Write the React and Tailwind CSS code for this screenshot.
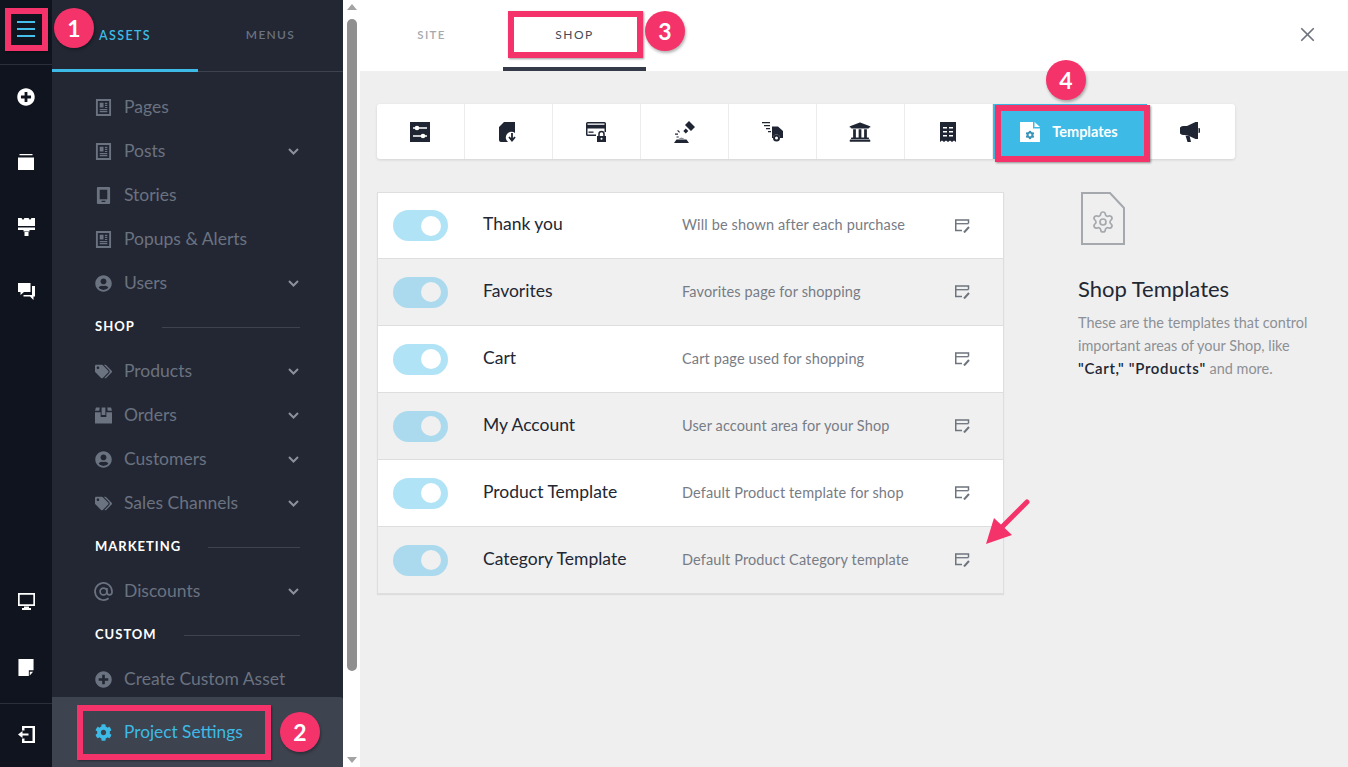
import { Settings, X } from "lucide-react";
import { FaCog, FaPlusCircle, FaTags, FaUniversity, FaUserCircle } from "react-icons/fa";

function PageIcon({ className }) {
  return (
    <svg className={className} viewBox="0 0 16 18" fill="currentColor">
      <path fillRule="evenodd" d="M0 0h16v18H0zM2 2v14h12V2z" />
      <path d="M4 4h4v5H4zM9.500 4H12v1.300H9.500zM9.500 6.200H12v1.300H9.500zM9.500 8.400H12v1.100H9.500zM4 10.500h8v1.300H4zM4 12.800h8v1.300H4z" />
    </svg>
  );
}

function PhoneIcon({ className }) {
  return (
    <svg className={className} viewBox="0 0 14 18" fill="currentColor">
      <path fillRule="evenodd" d="M1 0h12a1 1 0 0 1 1 1v16a1 1 0 0 1-1 1H1a1 1 0 0 1-1-1V1a1 1 0 0 1 1-1zM3 3v10h8V3zM5 14.600v1.200h4v-1.200z" />
    </svg>
  );
}

function BoxIcon({ className }) {
  return (
    <svg className={className} viewBox="0 0 18 17" fill="currentColor">
      <path d="M0 5h6v5h6V5h6v12H0zM1 0h4L4.500 3.600H0zM13 0h4l1 3.600h-4.500zM7 0h4v8H7z" />
    </svg>
  );
}

function AtIcon({ className }) {
  return (
    <svg className={`${className} scale-[1.2]`} viewBox="0 0 24 24" fill="none" stroke="currentColor" strokeWidth="2">
      <circle cx="12" cy="12" r="4" />
      <path d="M16 8v5a3 3 0 0 0 6 0v-1a10 10 0 1 0-4 8" />
    </svg>
  );
}

function ChevronIcon() {
  return (
    <svg className="h-[7px] w-[11px] text-[#8b909a]" viewBox="0 0 11 7" fill="none" stroke="currentColor" strokeWidth="2">
      <path d="M1 1l4.500 4.500L10 1" />
    </svg>
  );
}

function MenuLink({ icon: Icon, label, arrow }) {
  return (
    <div className="flex h-11 items-center pl-[43px] pr-[44px] text-[#6b7280]">
      <span className="flex w-[29px] shrink-0 items-center">
        <Icon className="h-[17px] w-[17px]" />
      </span>
      <span className="flex-1 text-[17.500px]">{label}</span>
      {arrow ? <ChevronIcon /> : null}
    </div>
  );
}

function MenuHeading({ label }) {
  return (
    <div className="flex h-[44px] items-center gap-[27px] pl-[43px] pr-[43px]">
      <span className="text-[13px] font-bold tracking-[1px] text-white">{label}</span>
      <span className="h-px flex-1 bg-[#3d4350]" />
    </div>
  );
}

function RailIcon({ children }) {
  return <div className="flex h-[65px] items-center justify-center text-white">{children}</div>;
}

function Rail() {
  return (
    <div className="flex h-full w-[52px] shrink-0 flex-col bg-[#10141e]">
      <div className="flex h-[65px] shrink-0 items-center justify-center border-b border-[#2a2f3a] pb-[6px]">
        <svg className="h-[16px] w-[18px] text-[#45c0ea]" viewBox="0 0 18 16" fill="none" stroke="currentColor" strokeWidth="2">
          <path d="M0 1h18M0 8h18M0 15h18" />
        </svg>
      </div>
      <div className="-mt-px flex-1">
        <RailIcon>
          <FaPlusCircle className="h-[18px] w-[18px]" />
        </RailIcon>
        <RailIcon>
          <svg className="h-4 w-4" viewBox="0 0 16 16" fill="currentColor">
            <path d="M0 3.500h16V16H0zM1.500 0h13v1.200h-13z" />
          </svg>
        </RailIcon>
        <RailIcon>
          <svg className="h-[18px] w-[17px]" viewBox="0 0 17 18" fill="currentColor">
            <path d="M0 0h3.500l1.500 2 1.500-2h4L12 2l1.500-2H17v8H0zM0 9.500h17V12h-5.500v1.500h-6V12H0zM6.500 14h4v4h-4z" />
          </svg>
        </RailIcon>
        <RailIcon>
          <svg className="h-[17px] w-[17px]" viewBox="0 0 17 17" fill="currentColor">
            <path d="M0 0h12.500v9H6l-3.500 3V9H0z" />
            <path d="M14 3h3v10.500h-1.500v3.500l-3.500-3.500H5.500V12H14z" />
          </svg>
        </RailIcon>
      </div>
      <div className="h-[66px]">
        <RailIcon>
          <svg className="h-[17px] w-[17px]" viewBox="0 0 17 17" fill="currentColor">
            <path fillRule="evenodd" d="M0 0h17v13H0zM1.700 1.700v9.600h13.600V1.700z" />
            <path d="M6 13.500h5V15h2v2H4v-2h2z" />
          </svg>
        </RailIcon>
      </div>
      <div className="mb-[2px] h-[66px]">
        <RailIcon>
          <svg className="h-[17px] w-4" viewBox="0 0 16 18" fill="currentColor">
            <path d="M0 0h16v12h-5v6H0zM12 13.500h3.500L12 17.500z" />
          </svg>
        </RailIcon>
      </div>
      <div className="flex h-[64px] shrink-0 items-center justify-center border-t border-[#2a2f3a] pb-[2px]">
        <svg className="h-[17px] w-[17px] text-white" viewBox="0 0 17 17" fill="currentColor">
          <path fillRule="evenodd" d="M4 0h13v17H4v-4.500h2.500V15h8V2h-8v2.500H4z" />
          <path d="M0 8.500 4.500 5v2.500h6v2h-6V12z" />
        </svg>
      </div>
    </div>
  );
}

function Sidebar() {
  return (
    <div className="flex h-full w-[291px] shrink-0 flex-col bg-[#222733]">
      <div className="flex h-[72px] shrink-0 border-b border-[#3d4350] text-[12px] font-semibold tracking-[1.300px]">
        <div className="-mb-px flex w-[146px] items-center justify-center border-b-[3px] border-[#3dbbe6] pt-[3px] text-[12.500px] tracking-[1.400px] text-[#3dbbe6]">ASSETS</div>
        <div className="flex w-[145px] items-center justify-center pb-[1px] text-[#6b7280]">MENUS</div>
      </div>
      <div className="min-h-0 flex-1 pt-[13px]">
        <MenuLink icon={PageIcon} label="Pages" />
        <MenuLink icon={PageIcon} label="Posts" arrow />
        <MenuLink icon={PhoneIcon} label="Stories" />
        <MenuLink icon={PageIcon} label="Popups & Alerts" />
        <MenuLink icon={FaUserCircle} label="Users" arrow />
        <MenuHeading label="SHOP" />
        <MenuLink icon={FaTags} label="Products" arrow />
        <MenuLink icon={BoxIcon} label="Orders" arrow />
        <MenuLink icon={FaUserCircle} label="Customers" arrow />
        <MenuLink icon={FaTags} label="Sales Channels" arrow />
        <MenuHeading label="MARKETING" />
        <MenuLink icon={AtIcon} label="Discounts" arrow />
        <MenuHeading label="CUSTOM" />
        <MenuLink icon={FaPlusCircle} label="Create Custom Asset" />
      </div>
      <div className="flex h-[70px] shrink-0 items-center rounded-tr-[3px] bg-[#3e4350] pl-[43px] text-[#3dbbe6]">
        <FaCog className="mr-[12px] h-[17px] w-[17px]" />
        <span className="text-[17.300px]">Project Settings</span>
      </div>
    </div>
  );
}

function Scrollbar() {
  return (
    <div className="flex h-full w-[17px] shrink-0 flex-col items-center bg-white">
      <div className="mt-[4px] h-0 w-0 border-x-[5px] border-b-[6px] border-x-transparent border-b-[#a3a3a3]" />
      <div className="mt-[9px] h-[652px] w-[10px] rounded-[5px] bg-[#8f8f8f]" />
      <div className="mt-auto mb-[4px] h-0 w-0 border-x-[5px] border-t-[6px] border-x-transparent border-t-[#a3a3a3]" />
    </div>
  );
}

function SlidersIcon() {
  return (
    <svg className="h-5 w-5" viewBox="0 0 20 20">
      <rect width="20" height="20" fill="#1f2532" />
      <path d="M3 6h14M3 14h14" stroke="#fff" strokeWidth="1.500" />
      <circle cx="7" cy="6" r="2.300" fill="#fff" />
      <circle cx="13" cy="14" r="2.300" fill="#fff" />
    </svg>
  );
}

function FileDownIcon() {
  return (
    <svg className="h-5 w-[18px]" viewBox="0 0 18 20">
      <path d="M5 0h11v11a5 5 0 0 0-7 9H2a2 2 0 0 1-2-2V5z" fill="#1f2532" />
      <path d="M13 11v7M10 15l3 3.500 3-3.500" stroke="#1f2532" strokeWidth="1.800" fill="none" />
    </svg>
  );
}

function CardLockIcon() {
  return (
    <svg className="h-5 w-5" viewBox="0 0 20 20">
      <path fillRule="evenodd" d="M1.500 0h17A1.500 1.500 0 0 1 20 1.500V10h-1.500V6.500h-17v6h8.500V14H1.500A1.500 1.500 0 0 1 0 12.500v-11A1.500 1.500 0 0 1 1.500 0z" fill="#1f2532" />
      <path d="M1.500 1.500h17v1.300h-17z" fill="#fff" />
      <path d="M2.500 9.500h5v1.300h-5z" fill="#1f2532" />
      <path d="M11 14h9v6h-9z" fill="#1f2532" />
      <path d="M13 14v-2a2.500 2.500 0 0 1 5 0v2" stroke="#1f2532" strokeWidth="1.500" fill="none" />
      <circle cx="15.500" cy="16.800" r="1" fill="#fff" />
    </svg>
  );
}

function GavelIcon() {
  return (
    <svg className="h-[22px] w-[21px]" viewBox="0 0 21 22" fill="#1f2532">
      <path d="M11 4 15 0l6 6-4 4zM11.800 7.500l2.500 2.500-2.500 2.500-2.500-2.500zM0 22l2.500-3.500h10L15 22z" />
      <path d="M4.500 17.500q3-1.500 6 0zM1 12.500h3v1.200H1zM4 9l2 2-.8.8-2-2zM2.500 15.500h2.200v1H2.500z" />
    </svg>
  );
}

function TruckIcon() {
  return (
    <svg className="h-[20px] w-[21px]" viewBox="0 0 21 20">
      <path d="M0 0h8v1.300H0zM2 3h6v1.300H2zM4 6h4v1.300H4zM6 9h3v1.300H6z" fill="#1f2532" />
      <path d="M10 4.500h6l5 4.500v7h-3a3.500 3.500 0 0 0-7 0h-1z" fill="#1f2532" />
      <circle cx="14.500" cy="16" r="3.500" fill="#1f2532" />
      <circle cx="14.500" cy="16" r="1.500" fill="#fff" />
    </svg>
  );
}

function ReceiptIcon() {
  return (
    <svg className="h-5 w-4" viewBox="0 0 16 20">
      <path d="M0 0h16v20l-2-1.500-2 1.500-2-1.500L8 20l-2-1.500L4 20l-2-1.500L0 20z" fill="#1f2532" />
      <path d="M3 5h4v1.500H3zM9 5h4v1.500H9zM3 9h4v1.500H3zM9 9h4v1.500H9zM3 13h4v1.500H3zM9 13h4v1.500H9z" fill="#fff" />
    </svg>
  );
}

function FileGearIcon() {
  return (
    <svg className="h-5 w-[20px]" viewBox="0 0 20 20">
      <path d="M0 0h13v6.500h7V20H0z" fill="#fff" />
      <path d="M14.500 0 20 5h-5.500z" fill="#fff" />
      <FaCog size={9} x={5.500} y={8.500} color="#3a93b8" />
    </svg>
  );
}

function MegaphoneIcon() {
  return (
    <svg className="h-5 w-5" viewBox="0 0 20 20" fill="#1f2532">
      <path d="M3.500 4H7l8.500-4H18v17h-2.500L7 13H3.500a4.500 4.500 0 0 1 0-9z" />
      <path d="M5.500 13.500h4l1.500 6.500H7.500zM18.500 6h.5a1 1 0 0 1 1 1v3a1 1 0 0 1-1 1h-.5z" />
    </svg>
  );
}

function ToolCell({ children }) {
  return <div className="flex h-full w-[88px] items-center justify-center border-r border-[#ececec] pr-px">{children}</div>;
}

function Toolbar() {
  return (
    <div className="flex h-[55px] w-[858px] rounded-[3px] bg-white shadow-[0_1px_3px_rgba(0,0,0,0.12)]">
      <ToolCell><SlidersIcon /></ToolCell>
      <ToolCell><FileDownIcon /></ToolCell>
      <ToolCell><CardLockIcon /></ToolCell>
      <ToolCell><GavelIcon /></ToolCell>
      <ToolCell><TruckIcon /></ToolCell>
      <ToolCell><FaUniversity className="h-[22px] w-[22px] text-[#1f2532]" /></ToolCell>
      <ToolCell><ReceiptIcon /></ToolCell>
      <div className="flex h-full w-[154px] items-center justify-center gap-[12px] bg-[#3dbbe6] pr-[2px] text-white">
        <FileGearIcon />
        <span className="text-[14.500px] font-bold">Templates</span>
      </div>
      <div className="flex h-full w-[88px] items-center justify-center pr-[2px]">
        <MegaphoneIcon />
      </div>
    </div>
  );
}

function EditIcon() {
  return (
    <svg className="h-[14px] w-[15px] text-[#6e747e]" viewBox="0 0 15 14" fill="none" stroke="currentColor">
      <path d="M13.500 4.500V1H.75v10.500H7" strokeWidth="1.500" />
      <path d="M1 4.700h12.500" strokeWidth="1.300" />
      <path d="M9 13.500 14 8" strokeWidth="2" />
    </svg>
  );
}

const templates = [
  { name: "Thank you", text: "Will be shown after each purchase" },
  { name: "Favorites", text: "Favorites page for shopping" },
  { name: "Cart", text: "Cart page used for shopping" },
  { name: "My Account", text: "User account area for your Shop" },
  { name: "Product Template", text: "Default Product template for shop" },
  { name: "Category Template", text: "Default Product Category template" },
];

function TemplateRow({ item, index }) {
  const odd = index % 2 === 1;
  return (
    <div className={`flex h-[67px] items-center border-b border-[#dedede] pl-[15px] ${index === 0 ? "border-t" : ""} ${odd ? "bg-[#f0f0f0]" : "bg-white"}`}>
      <div className={`flex h-[31px] w-[55px] shrink-0 items-center justify-end rounded-full pr-[7px] ${odd ? "bg-[#abdaee]" : "bg-[#b1e3f6]"}`}>
        <span className={`h-[20px] w-[20px] rounded-full ${odd ? "bg-[#f0f0f0]" : "bg-white"}`} />
      </div>
      <div className={`ml-[35px] w-[199px] shrink-0 text-[17.500px] text-[#222733] ${index === 0 ? "mb-[3px]" : "mb-[1px]"}`}>{item.name}</div>
      <div className={`w-[273px] shrink-0 text-[14.500px] tracking-[0.130px] text-[#777c85] ${index === 0 ? "mb-[2px]" : ""}`}>{item.text}</div>
      <EditIcon />
    </div>
  );
}

function InfoPanel() {
  return (
    <div className="ml-[74px] w-[240px]">
      <svg className="ml-[3px] h-[53px] w-[44px] text-[#a5a9ae]" viewBox="0 0 44 53" fill="none" stroke="currentColor" strokeWidth="2">
        <path d="M1 1h28l14 15v36H1z" />
        <Settings x={10} y={18} width={24} height={24} strokeWidth={1.700} />
      </svg>
      <h2 className="mt-[30px] text-[22px] leading-[28px] text-[#222733]">Shop Templates</h2>
      <p className="mt-[9px] text-[14.450px] leading-[22.500px] text-[#8c9096]">
        These are the templates that control important areas of your Shop, like{" "}
        <strong className="text-[15px] font-semibold tracking-[0.650px] text-[#222733]">"Cart," "Products"</strong> and more.
      </p>
    </div>
  );
}

function Badge({ children, className }) {
  return (
    <div className={`absolute flex h-10 w-10 items-center justify-center rounded-full bg-[#f5336b] text-[23px] font-bold text-white shadow-[1px_2px_3px_rgba(0,0,0,0.3)] ${className}`}>
      {children}
    </div>
  );
}

function Mark({ className }) {
  return <div className={`absolute border-[6px] border-[#f5336b] shadow-[1px_1px_2px_rgba(0,0,0,0.4)] ${className}`} />;
}

export default function App() {
  return (
    <div className="relative flex h-[767px] w-full overflow-hidden bg-[#efefef] font-['Lato',sans-serif]">
      <Rail />
      <Sidebar />
      <Scrollbar />

      <div className="flex h-full min-w-0 flex-1 flex-col">
        <div className="flex h-[71px] shrink-0 items-stretch bg-white pl-[23px] text-[11.500px] tracking-[1.300px]">
          <div className="flex w-[97px] items-center justify-center pb-[1px] font-semibold text-[#a5a9ae]">SITE</div>
          <div className="ml-[23px] flex w-[143px] items-center justify-center border-b-[4px] border-[#343a48] pt-[2px] text-[12px] tracking-[1.500px] text-[#444a56]">SHOP</div>
          <div className="ml-auto mr-[29px] flex items-center pb-[3px]">
            <X className="h-[23px] w-[23px] text-[#6e747e]" strokeWidth={1.800} />
          </div>
        </div>

        <div className="flex-1 pl-[17px] pt-[33px]">
          <Toolbar />
          <div className="mt-[33px] flex items-start">
            <div className="w-[627px] border-x border-[#dedede] shadow-[0_1px_1px_rgba(0,0,0,0.08)]">
              {templates.map((item, index) => (
                <TemplateRow key={item.name} item={item} index={index} />
              ))}
            </div>
            <InfoPanel />
          </div>
        </div>
      </div>

      <Mark className="left-[5px] top-[8px] h-[43px] w-[43px]" />
      <Badge className="left-[54px] top-[8px]">1</Badge>
      <Mark className="left-[77px] top-[705px] h-[55px] w-[194px]" />
      <Badge className="left-[280px] top-[712px]">2</Badge>
      <Mark className="left-[508px] top-[11px] h-[47px] w-[135px]" />
      <Badge className="left-[645px] top-[11px]">3</Badge>
      <Mark className="left-[995px] top-[105px] h-[57px] w-[155px]" />
      <Badge className="left-[1046px] top-[60px]">4</Badge>

      <svg className="absolute left-[980px] top-[495px] h-[55px] w-[55px]" viewBox="0 0 55 55">
        <path d="M47 7 19 35" stroke="#f5336b" strokeWidth="5" strokeLinecap="round" />
        <path d="M6 49 14 23 32 40z" fill="#f5336b" />
      </svg>
    </div>
  );
}
